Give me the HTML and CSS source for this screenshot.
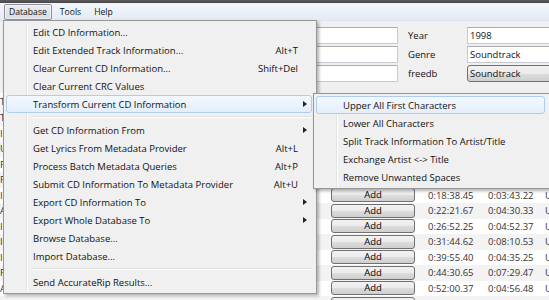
FILE: index.html
```html
<!DOCTYPE html>
<html lang="en">
<head>
  <meta charset="UTF-8">
  <title>CD Information</title>
  <link rel="stylesheet" href="styles.css">
</head>
<body>
  <div class="window">
    <div class="titlebar"></div>
    <div class="menubar">
      <span class="menubar-item open">Database</span>
      <span class="menubar-item">Tools</span>
      <span class="menubar-item">Help</span>
    </div>

    <div class="info">
      <span class="label">Artist</span>
      <div class="field">James Horner / Various Artists</div>
      <span class="label pad">Year</span>
      <div class="field">1998</div>

      <span class="label">Album</span>
      <div class="field">Back to Titanic</div>
      <span class="label pad">Genre</span>
      <div class="field">Soundtrack</div>

      <span class="label">Comment</span>
      <div class="field"></div>
      <span class="label pad">freedb</span>
      <div class="field combo">Soundtrack</div>
    </div>

    <table class="tracks">
      <colgroup>
        <col class="c-title"><col class="c-artist"><col class="c-lyr"><col class="c-add"><col class="c-start"><col class="c-len"><col class="c-status">
      </colgroup>
      <thead>
        <tr><th>Title</th><th>Artist</th><th></th><th>Lyrics</th><th>Start</th><th>Length</th><th>Status</th></tr>
      </thead>
      <tbody id="rows"></tbody>
    </table>
  </div>

  <!-- open Database menu -->
  <div class="menu main-menu">
    <div class="item"><span>Edit CD Information...</span></div>
    <div class="item"><span>Edit Extended Track Information...</span><span class="key">Alt+T</span></div>
    <div class="item"><span>Clear Current CD Information...</span><span class="key">Shift+Del</span></div>
    <div class="item"><span>Clear Current CRC Values</span></div>
    <div class="item hot"><span>Transform Current CD Information</span><span></span><span class="arrow"></span></div>
    <div class="sep"></div>
    <div class="item"><span>Get CD Information From</span><span></span><span class="arrow"></span></div>
    <div class="item"><span>Get Lyrics From Metadata Provider</span><span class="key">Alt+L</span></div>
    <div class="item"><span>Process Batch Metadata Queries</span><span class="key">Alt+P</span></div>
    <div class="item"><span>Submit CD Information To Metadata Provider</span><span class="key">Alt+U</span></div>
    <div class="item"><span>Export CD Information To</span><span></span><span class="arrow"></span></div>
    <div class="item"><span>Export Whole Database To</span><span></span><span class="arrow"></span></div>
    <div class="item"><span>Browse Database...</span></div>
    <div class="item"><span>Import Database...</span></div>
    <div class="sep"></div>
    <div class="item"><span>Send AccurateRip Results...</span></div>
  </div>

  <div class="menu sub-menu">
    <div class="item hot"><span>Upper All First Characters</span></div>
    <div class="item"><span>Lower All Characters</span></div>
    <div class="item"><span>Split Track Information To Artist/Title</span></div>
    <div class="item"><span>Exchange Artist &lt;-&gt; Title</span></div>
    <div class="item"><span>Remove Unwanted Spaces</span></div>
  </div>

  <script>
    const rows = document.getElementById("rows");

    const TRACKS = [
      ["Titanic Suite", "0:00:00.00", "0:04:12.30"],
      ["Into the Deep", "0:04:12.30", "0:03:08.47"],
      ["Unable to Stay, Unwilling to Leave", "0:07:21.02", "0:03:51.60"],
      ["Fiddle Tune", "0:11:12.62", "0:02:55.15"],
      ["Finale", "0:14:08.02", "0:04:30.43"],
      ["It's a Long Way", "0:18:38.45", "0:03:43.22"],
      ["An Irish Party", "0:22:21.67", "0:04:30.33"],
      ["In Third Class", "0:26:52.25", "0:04:52.37"],
      ["Iceberg", "0:31:44.62", "0:08:10.53"],
      ["In the Hold", "0:39:55.40", "0:04:35.25"],
      ["Funeral Song", "0:44:30.65", "0:07:29.47"],
      ["A Building Panic", "0:52:00.37", "0:04:56.48"],
      ["Epilogue", "0:56:56.85", "0:03:10.12"]
    ];

    TRACKS.forEach(track => {
      const tr = document.createElement("tr");
      tr.innerHTML =
        `<td>${track[0]}</td><td>James Horner</td><td></td>` +
        `<td><button class="add">Add</button></td>` +
        `<td class="t1">${track[1]}</td><td class="t2">${track[2]}</td><td class="t3">Unknown</td>`;
      rows.appendChild(tr);
    });
  </script>
</body>
</html>
```

FILE: styles.css
```css
body {
  margin: 0;
  width: 549px;
  height: 300px;
  overflow: hidden;
  position: relative;
  font-family: "Open Sans", sans-serif;
  font-size: 9.5px;
  color: #111;
  background-color: #f0f0f0;
}

.titlebar {
  height: 3px;
  background: linear-gradient(#5e5e5e, #444);
}

.menubar {
  height: 17px;
  display: flex;
  align-items: center;
  padding-left: 4px;
  font-size: 8.6px;
  background: linear-gradient(#f3f6fb, #e4eaf4);
  border-bottom: 1px solid #dde3ec;
}

.menubar-item {
  height: 14px;
  line-height: 14px;
  padding: 0 4px;
  margin-right: 3px;
  border: 1px solid transparent;
  border-radius: 2px;
}

.menubar-item.open {
  border-color: #8d9199;
  background: linear-gradient(#e9ecf0, #d9dde3);
  box-shadow: inset 0 0 0 1px rgba(255, 255, 255, 0.5);
}

/* CD info fields */
.info {
  display: grid;
  grid-template-columns: 36px 362px 69px 110px;
  grid-auto-rows: 17px;
  row-gap: 2px;
  padding: 6px 0 11px 0;
  align-items: center;
}

.label {
  padding-left: 6px;
}

.label.pad {
  padding-left: 10px;
}

.field {
  height: 17px;
  box-sizing: border-box;
  line-height: 15px;
  padding-left: 2px;
  background-color: #fff;
  border: 1px solid #c7cbd1;
  border-top-color: #abadb3;
  white-space: nowrap;
  overflow: hidden;
}

.field.combo {
  border: 1px solid #707070;
  border-radius: 3px;
  background: linear-gradient(#f2f2f2 0%, #ebebeb 50%, #dddddd 51%, #cfcfcf 100%);
}

/* track grid */
.tracks {
  table-layout: fixed;
  width: 600px;
  border-collapse: collapse;
  background-color: #fff;
  color: #333;
}

.c-title { width: 210px; }
.c-artist { width: 107px; }
.c-lyr { width: 13px; }
.c-add { width: 86px; }
.c-start { width: 66px; }
.c-len { width: 57px; }
.c-status { width: 61px; }

.tracks th {
  height: 17px;
  padding: 0;
  font-weight: normal;
  text-align: left;
  background: linear-gradient(#fff, #f1f2f4);
  border-right: 1px solid #e3e6ea;
}

.tracks td {
  height: 15.5px;
  padding: 0;
  white-space: nowrap;
  overflow: hidden;
  line-height: 15px;
}

.tracks tbody tr:nth-child(odd) {
  background-color: #f3f3f3;
}

.tracks td.t1 { padding-left: 12px; }
.tracks td.t2 { padding-left: 6px; }
.tracks td.t3 { padding-left: 6px; }

.add {
  display: block;
  width: 84px;
  height: 14px;
  margin: 0 0 0 1px;
  padding: 0;
  font-family: inherit;
  font-size: 9.5px;
  line-height: 12px;
  color: #000;
  border: 1px solid #707070;
  border-radius: 3px;
  background: linear-gradient(#f2f2f2 0%, #ebebeb 50%, #dddddd 51%, #cfcfcf 100%);
}

/* popup menus */
.menu {
  position: absolute;
  box-sizing: border-box;
  padding: 2px 4px 2px 2px;
  background-color: #f0f0f0;
  border: 1px solid #979797;
  box-shadow: 2px 2px 3px rgba(0, 0, 0, 0.3);
}

.menu::before {
  content: "";
  position: absolute;
  left: 22px;
  top: 2px;
  bottom: 2px;
  width: 1px;
  background-color: #e2e3e3;
  border-right: 1px solid #fff;
}

.main-menu {
  left: 3px;
  top: 20px;
  width: 314px;
}

.sub-menu {
  left: 313px;
  top: 93px;
  width: 237px;
}

.item {
  position: relative;
  height: 18px;
  box-sizing: border-box;
  display: grid;
  grid-template-columns: 1fr auto 13px;
  align-items: center;
  padding-left: 26px;
  border: 1px solid transparent;
  border-radius: 3px;
  white-space: nowrap;
}

.item.hot {
  border-color: #aecdf3;
  background: linear-gradient(#f3f8fe, #e4eefb);
}

.key {
  text-align: right;
}

.arrow {
  justify-self: start;
  margin-left: 5px;
  width: 0;
  height: 0;
  border-top: 3.5px solid transparent;
  border-bottom: 3.5px solid transparent;
  border-left: 4px solid #222;
}

.sep {
  position: relative;
  height: 8px;
  margin-left: 26px;
}

.sep::after {
  content: "";
  position: absolute;
  left: 0;
  right: 0;
  top: 3px;
  height: 1px;
  background-color: #e0e0e0;
  border-bottom: 1px solid #fff;
}
```
